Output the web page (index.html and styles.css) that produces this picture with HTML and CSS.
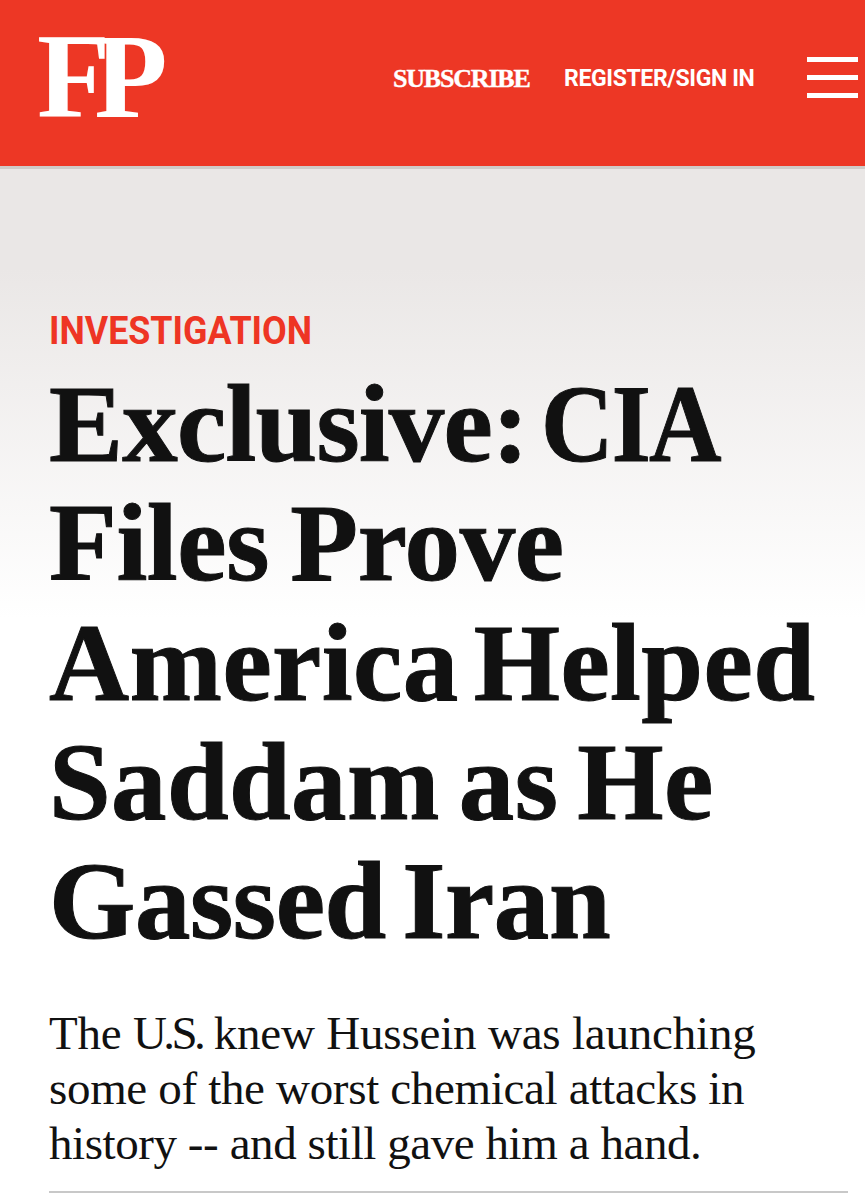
FILE: index.html
```
<!DOCTYPE html>
<html lang="en">

<head>
  <meta charset="UTF-8">
  <meta name="viewport" content="width=device-width, initial-scale=1.0">
  <title>Exclusive: CIA Files Prove America Helped Saddam as He Gassed Iran</title>
  <link rel="stylesheet" href="styles.css">
</head>

<body>
  <header class="header">
    <a class="logo" href="#">FP</a>
    <nav class="nav">
      <a class="subscribe" href="#">SUBSCRIBE</a>
      <a class="register" href="#">REGISTER/SIGN IN</a>
      <button type="button" class="menu">
        <span></span>
        <span></span>
        <span></span>
      </button>
    </nav>
  </header>

  <article class="article">
    <a class="category" href="#">INVESTIGATION</a>
    <h1 class="title">
      <span class="t1">Exclusive: <b>CIA</b></span>
      <span class="t2">Files Prove</span>
      <span class="t3">America Helped</span>
      <span class="t4">Saddam as He</span>
      <span class="t5">Gassed Iran</span>
    </h1>
    <p class="dek">
      <span class="d1">The <i>U.S.</i> knew Hussein was launching</span>
      <span class="d2">some of the worst chemical attacks in</span>
      <span class="d3">history -- and still gave him a hand.</span>
    </p>
  </article>
</body>

</html>
```
FILE: styles.css
```
* {
  box-sizing: border-box;
}

body {
  margin: 0;
  height: 1200px;
  overflow: hidden;
  background-color: #fff;
  color: #111;
}

a {
  color: inherit;
  text-decoration: none;
}

.header {
  display: flex;
  justify-content: space-between;
  height: 169px;
  padding: 10px 7px 0 37px;
  background-color: #ed3725;
  border-bottom: 3px solid #d0cbc8;
  color: #fff;
}

.logo {
  height: 134px;
  font: bold 120px/134px "Liberation Serif", serif;
  letter-spacing: -16px;
}

.nav {
  display: flex;
  align-items: center;
  height: 136px;
  white-space: nowrap;
}

.subscribe {
  width: 171px;
  padding-top: 2px;
  font: bold 26px/30px "Liberation Serif", serif;
  letter-spacing: -1.2px;
  -webkit-text-stroke: .4px #fff;
}

.register {
  width: 243px;
  font: bold 24.5px/30px Roboto, sans-serif;
  letter-spacing: -.4px;
  transform: scaleX(.94);
  transform-origin: left;
}

.menu {
  display: flex;
  flex-direction: column;
  justify-content: space-between;
  width: 51px;
  height: 41px;
  margin-bottom: 2px;
  padding: 0;
  border: none;
  background: none;
  cursor: pointer;
}

.menu span {
  height: 5px;
  background-color: #fff;
}

.article {
  height: 1025px;
  margin-bottom: 6px;
  padding: 137px 17px 0 49px;
  background: linear-gradient(#eae7e6 0, #eae7e6 100px, #fff 450px);
}

.category {
  display: block;
  color: #ee3524;
  font: bold 39.5px/50px Roboto, sans-serif;
  transform: scaleX(.907);
  transform-origin: left;
}

.title {
  margin: 8px 0 0;
  font: bold 111px/119.3px "Liberation Serif", serif;
  -webkit-text-stroke: 1px #111;
}

.title span,
.dek span {
  display: block;
  white-space: nowrap;
}

.t1 {
  letter-spacing: -.8px;
  word-spacing: -14px;
}

.t1 b {
  display: inline-block;
  letter-spacing: -2px;
  transform: scaleX(.905);
  transform-origin: left;
}

.t2 {
  letter-spacing: -.4px;
  word-spacing: -6px;
}

.t3 {
  letter-spacing: .4px;
  word-spacing: -13px;
}

.t4 {
  letter-spacing: .35px;
  word-spacing: -9px;
}

.t5 {
  letter-spacing: -.4px;
  word-spacing: -11px;
}

.dek {
  margin: 46px 0 0;
  height: 187px;
  border-bottom: 2px solid #c8c8c8;
  font: 47px/55px "Liberation Serif", serif;
}

.d1 {
  letter-spacing: -.2px;
}

.d1 i {
  font-style: normal;
  letter-spacing: -3.6px;
}

.d2 {
  letter-spacing: -.33px;
}

.d3 {
  letter-spacing: -.43px;
}
```
